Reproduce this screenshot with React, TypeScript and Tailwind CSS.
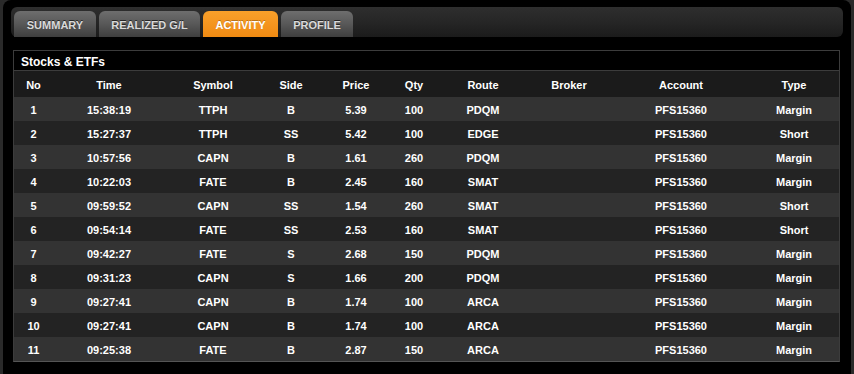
import React from 'react';

const tabs = [
  { label: 'SUMMARY', w: 'w-[82px]' },
  { label: 'REALIZED G/L', w: 'w-[101px]' },
  { label: 'ACTIVITY', w: 'w-[75px]', active: true },
  { label: 'PROFILE', w: 'w-[72px]' },
];

const columns = ['No', 'Time', 'Symbol', 'Side', 'Price', 'Qty', 'Route', 'Broker', 'Account', 'Type'];

const rows = [
  ['1', '15:38:19', 'TTPH', 'B', '5.39', '100', 'PDQM', '', 'PFS15360', 'Margin'],
  ['2', '15:27:37', 'TTPH', 'SS', '5.42', '100', 'EDGE', '', 'PFS15360', 'Short'],
  ['3', '10:57:56', 'CAPN', 'B', '1.61', '260', 'PDQM', '', 'PFS15360', 'Margin'],
  ['4', '10:22:03', 'FATE', 'B', '2.45', '160', 'SMAT', '', 'PFS15360', 'Margin'],
  ['5', '09:59:52', 'CAPN', 'SS', '1.54', '260', 'SMAT', '', 'PFS15360', 'Short'],
  ['6', '09:54:14', 'FATE', 'SS', '2.53', '160', 'SMAT', '', 'PFS15360', 'Short'],
  ['7', '09:42:27', 'FATE', 'S', '2.68', '150', 'PDQM', '', 'PFS15360', 'Margin'],
  ['8', '09:31:23', 'CAPN', 'S', '1.66', '200', 'PDQM', '', 'PFS15360', 'Margin'],
  ['9', '09:27:41', 'CAPN', 'B', '1.74', '100', 'ARCA', '', 'PFS15360', 'Margin'],
  ['10', '09:27:41', 'CAPN', 'B', '1.74', '100', 'ARCA', '', 'PFS15360', 'Margin'],
  ['11', '09:25:38', 'FATE', 'B', '2.87', '150', 'ARCA', '', 'PFS15360', 'Margin'],
];

// column widths tuned so the centres line up with the screenshot
const grid = 'grid grid-cols-[39px_112px_96px_60px_70px_46px_92px_80px_144px_82px]';

export default function App() {
  return (
    <div className="w-[854px] h-[374px] bg-[#2a2a2a] px-[3px] overflow-hidden font-['Liberation_Sans',Arial,sans-serif] font-bold">
      <div className="h-full bg-black rounded-t-[8px] px-[8px] pt-[7px]">
        {/* Tab bar */}
        <div className="h-[30px] rounded-[6px] bg-gradient-to-b from-[#2e2e2e] via-[#262626] to-[#1b1b1b] flex items-end gap-[3px] pl-[3px]">
          {tabs.map(t => (
            <div
              key={t.label}
              className={`${t.w} h-[26px] pt-[3px] rounded-t-[6px] flex items-center justify-center text-[11px] ${
                t.active
                  ? 'bg-gradient-to-b from-[#f9a02a] to-[#ef8a12] text-white [text-shadow:0_-1px_0_rgba(0,0,0,0.25)]'
                  : 'bg-gradient-to-b from-[#6e6e6e] via-[#585858] to-[#3e3e3e] text-[#dadada] [text-shadow:0_-1px_0_rgba(0,0,0,0.6)]'
              }`}
            >
              {t.label}
            </div>
          ))}
        </div>

        {/* Stocks & ETFs table */}
        <div className="mt-[13px] ml-[2px] w-[827px] border border-[#3c3c3c] border-b-[#555]">
          <div className="h-[20px] border-b border-[#3c3c3c] bg-black text-white text-[12px] leading-[22px] pl-[7px]">
            Stocks &amp; ETFs
          </div>
          <div className={`${grid} h-[26px] pt-[3px] bg-[#1b1b1b] items-center text-white text-[11px]`}>
            {columns.map(c => (
              <div key={c} className="text-center">{c}</div>
            ))}
          </div>
          {rows.map((r, i) => (
            <div
              key={r[0]}
              className={`${grid} h-[24px] pt-[2px] items-center text-white text-[11px] ${i % 2 === 0 ? 'bg-[#333333]' : 'bg-[#232323]'}`}
            >
              {r.map((cell, j) => (
                <div key={j} className="text-center">{cell}</div>
              ))}
            </div>
          ))}
        </div>
      </div>
    </div>
  );
}
